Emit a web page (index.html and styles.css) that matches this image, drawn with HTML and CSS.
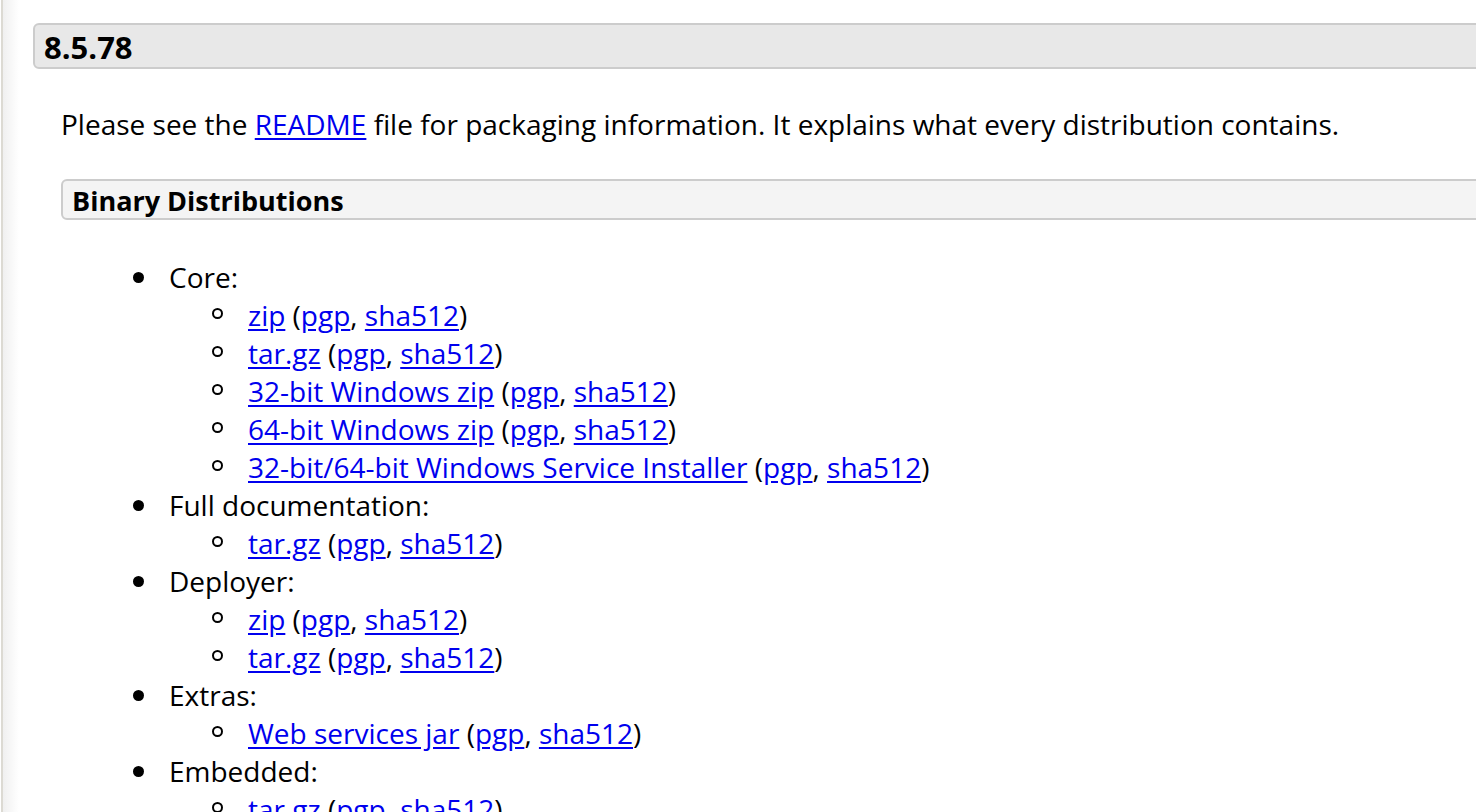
FILE: index.html
```html
<!DOCTYPE html>
<html lang="en">
<head>
<meta charset="utf-8">
<title>Tomcat 8.5.78</title>
<link rel="stylesheet" href="styles.css">
</head>
<body>
<div class="page">
  <div class="main">
    <h3 class="version">8.5.78</h3>
    <div class="section-body">
      <p class="intro">Please see the <a href="#">README</a> file for packaging information. It explains what every distribution contains.</p>
      <h4 class="sub">Binary Distributions</h4>
      <ul class="dists">
        <li>Core:
          <ul>
            <li><a href="#">zip</a> (<a href="#">pgp</a>, <a href="#">sha512</a>)</li>
            <li><a href="#">tar.gz</a> (<a href="#">pgp</a>, <a href="#">sha512</a>)</li>
            <li><a href="#">32-bit Windows zip</a> (<a href="#">pgp</a>, <a href="#">sha512</a>)</li>
            <li><a href="#">64-bit Windows zip</a> (<a href="#">pgp</a>, <a href="#">sha512</a>)</li>
            <li><a href="#">32-bit/64-bit Windows Service Installer</a> (<a href="#">pgp</a>, <a href="#">sha512</a>)</li>
          </ul>
        </li>
        <li>Full documentation:
          <ul>
            <li><a href="#">tar.gz</a> (<a href="#">pgp</a>, <a href="#">sha512</a>)</li>
          </ul>
        </li>
        <li>Deployer:
          <ul>
            <li><a href="#">zip</a> (<a href="#">pgp</a>, <a href="#">sha512</a>)</li>
            <li><a href="#">tar.gz</a> (<a href="#">pgp</a>, <a href="#">sha512</a>)</li>
          </ul>
        </li>
        <li>Extras:
          <ul>
            <li><a href="#">Web services jar</a> (<a href="#">pgp</a>, <a href="#">sha512</a>)</li>
          </ul>
        </li>
        <li>Embedded:
          <ul>
            <li><a href="#">tar.gz</a> (<a href="#">pgp</a>, <a href="#">sha512</a>)</li>
            <li><a href="#">zip</a> (<a href="#">pgp</a>, <a href="#">sha512</a>)</li>
          </ul>
        </li>
      </ul>
    </div>
  </div>
</div>
</body>
</html>
```

FILE: styles.css
```css
html, body {
  margin: 0;
  padding: 0;
  background: #fff;
  overflow: hidden;
}

body {
  font-family: "Open Sans", "Liberation Sans", sans-serif;
  font-size: 28px;
  line-height: 38px;
  color: #000;
}

.page {
  height: 812px;
  border-left: 2px solid #dcdad3;
  margin-left: 1px;
  background: linear-gradient(to right, #f0f0f0 0px, #fff 16px);
  padding-left: 30px;
  padding-top: 23px;
  box-sizing: border-box;
  overflow: hidden;
}

.main {
  margin-right: -40px;
}

.version {
  margin: 0;
  height: 46px;
  box-sizing: border-box;
  padding: 0 9px;
  font-size: 31px;
  font-weight: 700;
  line-height: 44px;
  background: #e8e8e8;
  border: 2px solid #cccccc;
  border-radius: 6px;
}

.section-body {
  padding-left: 28px;
}

.intro {
  margin: 36px 0 36px 0;
}

.sub {
  margin: 0;
  height: 41px;
  box-sizing: border-box;
  padding: 0 9px;
  font-size: 27px;
  font-weight: 700;
  line-height: 39px;
  background: #f4f4f4;
  border: 2px solid #cccccc;
  border-radius: 6px;
}

a {
  color: #0000ee;
  text-decoration: underline;
  text-underline-offset: 3px;
}

.dists {
  margin: 38px 0 0 0;
  padding-left: 108px;
  list-style: none;
}

.dists ul {
  margin: 0;
  padding-left: 79px;
  list-style: none;
}

.dists > li::before,
.dists ul > li::before {
  content: "";
  display: inline-block;
  width: 11px;
  height: 11px;
  box-sizing: border-box;
  border-radius: 50%;
  margin-left: -36px;
  margin-right: 25px;
}

.dists > li::before {
  background: #000;
  vertical-align: 5px;
}

.dists ul > li::before {
  border: 2px solid #000;
  background: transparent;
  vertical-align: 7px;
}
```
